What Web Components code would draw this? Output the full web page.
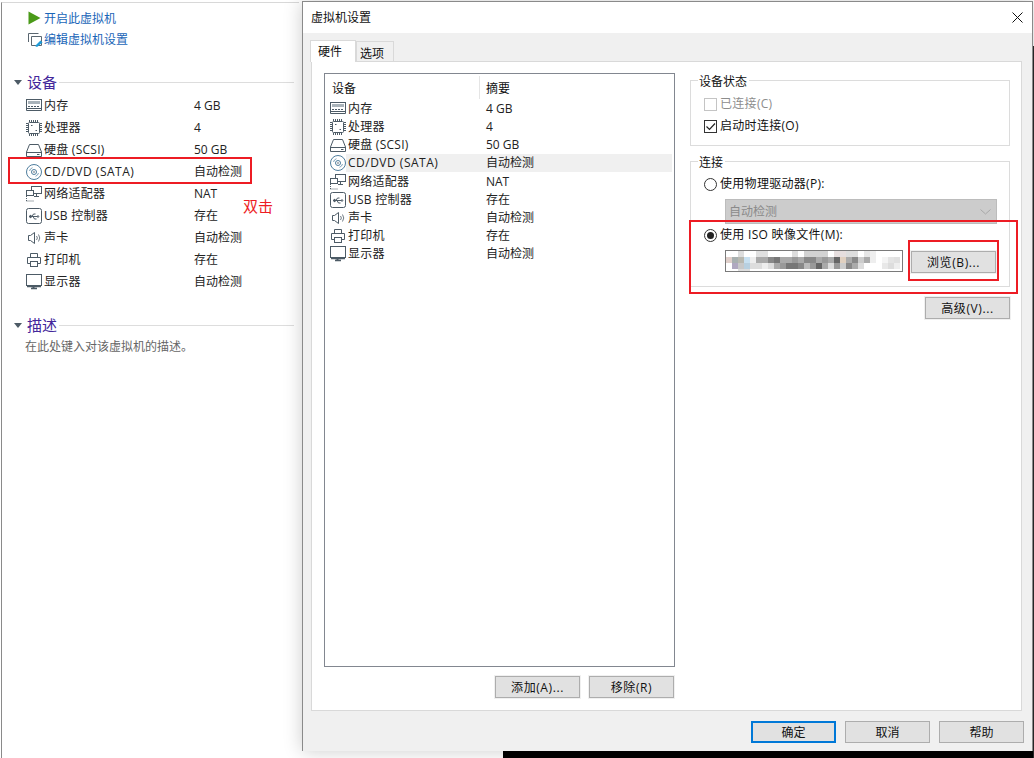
<!DOCTYPE html>
<html lang="zh">
<head>
<meta charset="utf-8">
<title>虚拟机设置</title>
<style>
  html, body { margin: 0; height: 100%; overflow: hidden; background: #fff; }
  body { font: 12px/18px "Open Sans", "Noto Sans CJK SC", sans-serif; color: #111; }
  .black { position: absolute; left: 503px; right: 0; top: 751px; bottom: 0; background: #000; }
  .edge { position: absolute; left: 1033px; right: 0; top: 46px; bottom: 0; background: #2a2a2a; }
  .mark { position: absolute; border: 2px solid #ed1c24; box-sizing: border-box; pointer-events: none; }
  .note { position: absolute; left: 243px; top: 197px; color: #ed1c24; font-size: 15px; line-height: 18px; }
</style>
</head>
<body>

<vm-panel>
  <vm-link icon="play" slot="links">开启此虚拟机</vm-link>
  <vm-link icon="edit" slot="links">编辑虚拟机设置</vm-link>
  <section-head slot="devices">设备</section-head>
  <device-row slot="devices" icon="memory" value="4 GB">内存</device-row>
  <device-row slot="devices" icon="cpu" value="4">处理器</device-row>
  <device-row slot="devices" icon="disk" value="50 GB">硬盘 (SCSI)</device-row>
  <device-row slot="devices" icon="cd" value="自动检测" style="--ls:.5px">CD/DVD (SATA)</device-row>
  <device-row slot="devices" icon="net" value="NAT">网络适配器</device-row>
  <device-row slot="devices" icon="usb" value="存在">USB 控制器</device-row>
  <device-row slot="devices" icon="sound" value="自动检测">声卡</device-row>
  <device-row slot="devices" icon="printer" value="存在">打印机</device-row>
  <device-row slot="devices" icon="monitor" value="自动检测">显示器</device-row>
  <section-head slot="desc">描述</section-head>
  <span slot="desc" style="display:block;margin:2px 0 0 11px;color:#666;line-height:18px">在此处键入对该虚拟机的描述。</span>
</vm-panel>

<div class="black"></div>
<div class="edge"></div>

<vm-dialog heading="虚拟机设置">
  <device-list slot="list">
    <device-row dense icon="memory" value="4 GB">内存</device-row>
    <device-row dense icon="cpu" value="4">处理器</device-row>
    <device-row dense icon="disk" value="50 GB">硬盘 (SCSI)</device-row>
    <device-row dense selected icon="cd" value="自动检测" style="--ls:.5px">CD/DVD (SATA)</device-row>
    <device-row dense icon="net" value="NAT">网络适配器</device-row>
    <device-row dense icon="usb" value="存在">USB 控制器</device-row>
    <device-row dense icon="sound" value="自动检测">声卡</device-row>
    <device-row dense icon="printer" value="存在">打印机</device-row>
    <device-row dense icon="monitor" value="自动检测">显示器</device-row>
  </device-list>
  <win-button slot="list-actions" halo>添加(A)...</win-button>
  <win-button slot="list-actions" halo>移除(R)</win-button>

  <group-box slot="side" label="设备状态" style="height:66px">
    <tick-box disabled>已连接(C)</tick-box>
    <tick-box checked>启动时连接(O)</tick-box>
  </group-box>
  <group-box slot="side" label="连接" style="height:126px;margin-top:15px">
    <radio-box style="margin-top:-1px">使用物理驱动器(P):</radio-box>
    <fake-select>自动检测</fake-select>
    <radio-box checked>使用 ISO 映像文件(M):</radio-box>
    <iso-path><win-button halo style="margin-top:1px">浏览(B)...</win-button></iso-path>
  </group-box>
  <win-button slot="side" halo style="align-self:flex-end;margin-top:10px">高级(V)...</win-button>

  <win-button slot="footer" primary>确定</win-button>
  <win-button slot="footer">取消</win-button>
  <win-button slot="footer">帮助</win-button>
</vm-dialog>

<div class="mark" style="left:8px;top:157px;width:244px;height:27px"></div>
<div class="note">双击</div>
<div class="mark" style="left:689px;top:220px;width:329px;height:74px"></div>
<div class="mark" style="left:908px;top:240px;width:91px;height:41px"></div>

<script>
const ICONS = {
  memory: '<rect x="0.5" y="1.5" width="15" height="9"/><rect x="2" y="3" width="12" height="3" fill="#a9b3ba" stroke="none"/><path d="M2 8.500h12" stroke-dasharray="2 1"/><path d="M0.500 10.500v2h15v-2"/>',
  cpu: '<rect x="2.500" y="2.500" width="11" height="11" rx="1"/><path d="M3.500 0v2M5.500 0v2M7.500 0v2M9.500 0v2M11.500 0v2M3.500 14v2M5.500 14v2M7.500 14v2M9.500 14v2M11.500 14v2M0 3.500h2M0 5.500h2M0 7.500h2M0 9.500h2M0 11.500h2M14 3.500h2M14 5.500h2M14 7.500h2M14 9.500h2M14 11.500h2"/><path d="M5 5.500h1.500M9.500 10.500h1.500"/>',
  disk: '<path d="M3.500 2.500h9l3 7.500v4.500h-15V10z"/><path d="M0.500 10.500h15M11 12.500h2.500"/>',
  cd: '<circle cx="8" cy="8" r="7.500"/><circle cx="8" cy="8" r="2.500"/><circle cx="8" cy="8" r=".8" fill="#4d5b66" stroke="none"/><path d="M3.500 7a4.500 4.500 0 0 1 3-3.300M12.500 9a4.500 4.500 0 0 1-3 3.300" stroke-opacity=".7"/>',
  net: '<rect x="5.500" y="0.500" width="10" height="7"/><rect x="0.500" y="4.500" width="7" height="5" fill="#fff"/><path d="M10.500 8v2.500M8 10.500h5"/><path d="M0.500 15h8M0.500 10v5" stroke-dasharray="1 1"/>',
  usb: '<rect x="0.500" y="0.500" width="15" height="15" rx="2"/><path d="M3.500 8.500h8"/><path d="M3 8.500l2-1.500v3z" fill="#4d5b66"/><path d="M6 8.500l1.500-2.500h2M7 8.500l1.500 2.500h2"/><circle cx="12" cy="8.500" r=".8"/>',
  sound: '<path d="M2.500 5.500h2L8.500 2.500v11l-4-3h-2z"/><path d="M10.500 6a3 3 0 0 1 0 4M12.500 4.500a6 6 0 0 1 0 7" stroke-opacity=".8"/>',
  printer: '<path d="M4.500 5.500v-4h7v4M4.500 11.500h-3v-6h13v6h-3"/><rect x="4.500" y="9.500" width="7" height="5"/>',
  monitor: '<rect x="0.500" y="0.500" width="15" height="11"/><path d="M5 14.500h6M1 12.500h14" stroke-width="1.500"/><path d="M7.500 12v2" stroke-width="2"/>'
};

class DevIcon extends HTMLElement {
  connectedCallback() {
    const name = this.getAttribute('name');
    const tint = name === 'cd' ? '#4f7e9e' : '#4d5b66';
    this.attachShadow({ mode: 'open' }).innerHTML = `
      <style>:host { display: block; width: 16px; height: 16px; } svg { display: block; overflow: visible; }</style>
      <svg width="16" height="16" viewBox="0 0 16 16" stroke="${tint}" fill="none" stroke-width="1">${ICONS[name] || ''}</svg>`;
  }
}
customElements.define('dev-icon', DevIcon);

class DeviceRow extends HTMLElement {
  connectedCallback() {
    const dense = this.hasAttribute('dense');
    this.attachShadow({ mode: 'open' }).innerHTML = `
      <style>
        :host { display: grid; grid-template-columns: ${dense ? '156px' : '168px'} 1fr; height: ${dense ? '18.2px' : '22px'}; align-items: center; color: #222; }
        .name { display: flex; align-items: center; gap: 2px; }
        :host([selected]) { background: linear-gradient(90deg, transparent 16px, #f0f0f0 16px); }
        .name span { letter-spacing: var(--ls, .25px); white-space: nowrap; }
      </style>
      <div class="name"><dev-icon name="${this.getAttribute('icon')}"></dev-icon><span><slot></slot></span></div>
      <div class="val">${this.getAttribute('value')}</div>`;
  }
}
customElements.define('device-row', DeviceRow);

class VmLink extends HTMLElement {
  connectedCallback() {
    const art = this.getAttribute('icon') === 'play'
      ? '<path d="M0.500 0.500l12 6.500-12 6.500z" fill="#4a9a18"/>'
      : '<path d="M0.500 10V1.500h10M3.500 4.500h10v9h-10z" fill="none" stroke="#5a6670"/><path d="M7 14l5.500-5.500 2 2L9 15z" fill="#1e9bd8"/>';
    this.attachShadow({ mode: 'open' }).innerHTML = `
      <style>
        :host { display: flex; align-items: center; gap: 1px; height: 21px; color: #1a66b8; }
        svg { display: block; flex: none; }
      </style>
      <svg width="15" height="15" viewBox="0 0 15 15">${art}</svg><slot></slot>`;
  }
}
customElements.define('vm-link', VmLink);

class SectionHead extends HTMLElement {
  constructor() {
    super();
    this.attachShadow({ mode: 'open' }).innerHTML = `
      <style>
        :host { display: flex; align-items: center; height: 20px; margin-bottom: 3px; color: #43279b; font-size: 15px; }
        i { width: 0; height: 0; border: 4.5px solid transparent; border-top: 5px solid #4d5b66; border-bottom: 0; margin: 1px 5px 0 0; }
        b { flex: 1; height: 1px; background: #ddd; margin-left: 2px; }
        span { line-height: 20px; }
      </style>
      <i></i><span><slot></slot></span><b></b>`;
  }
}
customElements.define('section-head', SectionHead);

class VmPanel extends HTMLElement {
  constructor() {
    super();
    this.attachShadow({ mode: 'open' }).innerHTML = `
      <style>
        :host { display: block; width: 298px; height: 756px; margin-left: 1px; margin-top: 2px; border-left: 1px solid #8a8a8a; border-top: 1px solid #d8d8d8; box-sizing: border-box; }
        .links { padding: 5px 0 0 26px; }
        .sec { padding: 0 5px 0 12px; }
        .devices { margin-top: 22px; }
        .rows ::slotted(device-row) { margin-left: 12px; }
        .desc { margin-top: 22px; }
      </style>
      <div class="links"><slot name="links"></slot></div>
      <div class="sec devices rows"><slot name="devices"></slot></div>
      <div class="sec desc"><slot name="desc"></slot></div>`;
  }
}
customElements.define('vm-panel', VmPanel);

class DeviceList extends HTMLElement {
  constructor() {
    super();
    this.attachShadow({ mode: 'open' }).innerHTML = `
      <style>
        :host { display: block; box-sizing: border-box; height: 594px; width: 351px; border: 1px solid #828790; background: #fff; padding: 2px 2px 0 5px; }
        .head { display: grid; grid-template-columns: 147px 1fr; height: 23.7px; align-items: start; margin-left: 2px; line-height: 25px; }
        .head div + div { border-left: 1px solid #e5e5e5; padding-left: 6px; height: 23px; }
      </style>
      <div class="head"><div>设备</div><div>摘要</div></div>
      <slot></slot>`;
  }
}
customElements.define('device-list', DeviceList);

class WinButton extends HTMLElement {
  constructor() {
    super();
    this.attachShadow({ mode: 'open' }).innerHTML = `
      <style>
        :host { display: flex; align-items: center; justify-content: center; box-sizing: border-box; width: 85px; height: 22px; padding-top: 2px; background: #e1e1e1; border: 1px solid #adadad; color: #111; line-height: 18px; flex: none; }
        :host([primary]) { border: 2px solid #0078d7; }
        :host([halo]) { box-shadow: 0 0 0 1px #f0f0f0; letter-spacing: .6px; }
      </style>
      <slot></slot>`;
  }
}
customElements.define('win-button', WinButton);

class GroupBox extends HTMLElement {
  constructor() {
    super();
    this.attachShadow({ mode: 'open' }).innerHTML = `
      <style>
        :host { display: block; box-sizing: border-box; border: 1px solid #dcdcdc; position: relative; padding: 12px 0 0 13px; }
        .cap { position: absolute; left: 7px; top: -8px; background: #fff; padding: 0 2px 0 1px; line-height: 18px; }
        .body { display: flex; flex-direction: column; }
      </style>
      <div class="cap">${this.getAttribute('label')}</div>
      <div class="body"><slot></slot></div>`;
  }
}
customElements.define('group-box', GroupBox);

class TickBox extends HTMLElement {
  connectedCallback() {
    const mark = this.hasAttribute('checked') ? '<path d="M2.500 6.500l3 3 5.500-6" fill="none" stroke="#222" stroke-width="1.200"/>' : '';
    const edge = this.hasAttribute('disabled') ? '#c4c4c4' : '#333';
    this.attachShadow({ mode: 'open' }).innerHTML = `
      <style>
        :host { display: flex; align-items: center; gap: 3px; height: 22px; letter-spacing: .3px; }
        :host([disabled]) { color: #8d8d8d; }
        svg { display: block; }
      </style>
      <svg width="13" height="13" viewBox="0 0 13 13"><rect x="0.500" y="0.500" width="12" height="12" fill="#fff" stroke="${edge}"/>${mark}</svg><slot></slot>`;
  }
}
customElements.define('tick-box', TickBox);

class RadioBox extends HTMLElement {
  connectedCallback() {
    const dot = this.hasAttribute('checked') ? '<circle cx="6.500" cy="6.500" r="3.500" fill="#222"/>' : '';
    this.attachShadow({ mode: 'open' }).innerHTML = `
      <style>
        :host { display: flex; align-items: center; gap: 3px; height: 22px; letter-spacing: .3px; }
        svg { display: block; }
      </style>
      <svg width="13" height="13" viewBox="0 0 13 13"><circle cx="6.500" cy="6.500" r="6" fill="#fff" stroke="#333"/>${dot}</svg><slot></slot>`;
  }
}
customElements.define('radio-box', RadioBox);

class FakeSelect extends HTMLElement {
  constructor() {
    super();
    this.attachShadow({ mode: 'open' }).innerHTML = `
      <style>
        :host { display: flex; align-items: center; justify-content: space-between; box-sizing: border-box; width: 272px; height: 25px; margin: 4px 0 0 21px; padding: 0 5px 0 3px; background: #ccc; border: 1px solid #bcbcbc; color: #8a8a8a; }
        svg { display: block; }
      </style>
      <slot></slot><svg width="11" height="6" viewBox="0 0 11 6"><path d="M0.500 0.500l5 4.500 5-4.500" fill="none" stroke="#a8a8a8"/></svg>`;
  }
}
customElements.define('fake-select', FakeSelect);

// the path in the reference is pixelated out, so these are just the mosaic cells
const MOSAIC = [
  'ffffff,ffffff,dddddd,ffffff,ffffff,e0e0e0,e0e0e0,ffffff,ffffff,ffffff,ffffff,dddddd,ffffff,d2d2d2,d2d2d2,d2d2d2,d2d2d2,ffffff,e6dede,e6dede,dddddd,dddddd,ffffff,e6e6e6,eeeeee,ffffff,ffffff,ffffff,ffffff,ffffff',
  'e0cfca,a8b0b0,b8b8b0,c8e0f0,eeeeee,aaaaaa,aaaaaa,888888,777777,aaaaaa,aaaaaa,999999,aaaaaa,888888,888888,aaaaaa,999999,aaaaaa,666666,e0d0c0,aaaaaa,888888,cccccc,aaaaaa,eeeeee,ffffff,f4f4f4,e4e4e4,e0e0e0,ffffff',
  'ffffff,b0a8c0,c8c8c8,b8d0e0,dddddd,dddddd,eeeeee,dddddd,aaaaaa,999999,777777,777777,888888,bbbbbb,999999,666666,aaaaaa,dddddd,999999,cccccc,888888,aaaaaa,dddddd,ffffff,ffffff,ffffff,e8e8e8,dddddd,eeeeee,ffffff',
  'ffffff,ffffff,dddddd,dddddd,ffffff,ffffff,ffffff,ffffff,ffffff,ffffff,ffffff,ffffff,ffffff,ffffff,ffffff,ffffff,ffffff,ffffff,ffffff,ffffff,ffffff,ffffff,ffffff,ffffff,ffffff,ffffff,ffffff,ffffff,ffffff,ffffff'
];

class IsoPath extends HTMLElement {
  constructor() {
    super();
    const cells = MOSAIC.map((row, y) => row.split(',').map((c, x) =>
      `<rect x="${x * 6}" y="${y * 6}" width="6" height="6" fill="#${c}"/>`).join('')).join('');
    this.attachShadow({ mode: 'open' }).innerHTML = `
      <style>
        :host { display: flex; align-items: flex-start; gap: 8px; margin: 4px 0 0 21px; }
        .box { box-sizing: border-box; width: 178px; height: 22px; border: 1px solid #7a7a7a; background: #fff; overflow: hidden; }
        svg { display: block; }
      </style>
      <div class="box"><svg width="176" height="20" shape-rendering="crispEdges">${cells}</svg></div>
      <slot></slot>`;
  }
}
customElements.define('iso-path', IsoPath);

class VmDialog extends HTMLElement {
  connectedCallback() {
    this.attachShadow({ mode: 'open' }).innerHTML = `
      <style>
        :host { position: absolute; left: 302px; top: 1px; width: 731px; height: 750px; box-sizing: border-box; border: 1px solid #8a8a8a; border-bottom: 0; background: #f0f0f0; box-shadow: 0 0 18px rgba(0,0,0,.2); display: flex; flex-direction: column; }
        .title { height: 31px; flex: none; background: #fff; display: flex; align-items: center; justify-content: space-between; padding: 0 9px 0 8px; font-size: 12px; color: #111; }
        .title svg { display: block; }
        .tabs { display: flex; height: 28px; flex: none; padding: 7px 0 0 7px; box-sizing: border-box; align-items: flex-end; }
        .tab { box-sizing: border-box; background: #f0f0f0; border: 1px solid #d9d9d9; border-bottom: 0; height: 20px; line-height: 23px; padding: 0 5px 0 3px; width: 38px; }
        .tab.on { background: #fff; height: 22px; width: 46px; padding: 0 7px; margin-bottom: -1px; position: relative; z-index: 1; line-height: 22px; }
        .pane { box-sizing: border-box; margin: 0 10px 0 8px; height: 650px; flex: none; background: #fff; border: 1px solid #d9d9d9; padding: 11px 11px 0 12px; display: flex; gap: 15px; }
        .left { width: 351px; flex: none; }
        .actions { display: flex; justify-content: flex-end; gap: 9px; margin-top: 9px; padding-right: 1px; }
        .side { flex: 1; padding-top: 7px; display: flex; flex-direction: column; min-width: 0; }
        .foot { display: flex; justify-content: flex-end; gap: 9px; padding: 10px 8px 0 0; }
      </style>
      <div class="title"><span>${this.getAttribute('heading')}</span>
        <svg width="11" height="11" viewBox="0 0 11 11"><path d="M0.500 0.500l10 10M10.500 0.500l-10 10" stroke="#111" fill="none"/></svg></div>
      <div class="tabs"><div class="tab on">硬件</div><div class="tab">选项</div></div>
      <div class="pane">
        <div class="left"><slot name="list"></slot><div class="actions"><slot name="list-actions"></slot></div></div>
        <div class="side"><slot name="side"></slot></div>
      </div>
      <div class="foot"><slot name="footer"></slot></div>`;
  }
}
customElements.define('vm-dialog', VmDialog);
</script>
</body>
</html>
